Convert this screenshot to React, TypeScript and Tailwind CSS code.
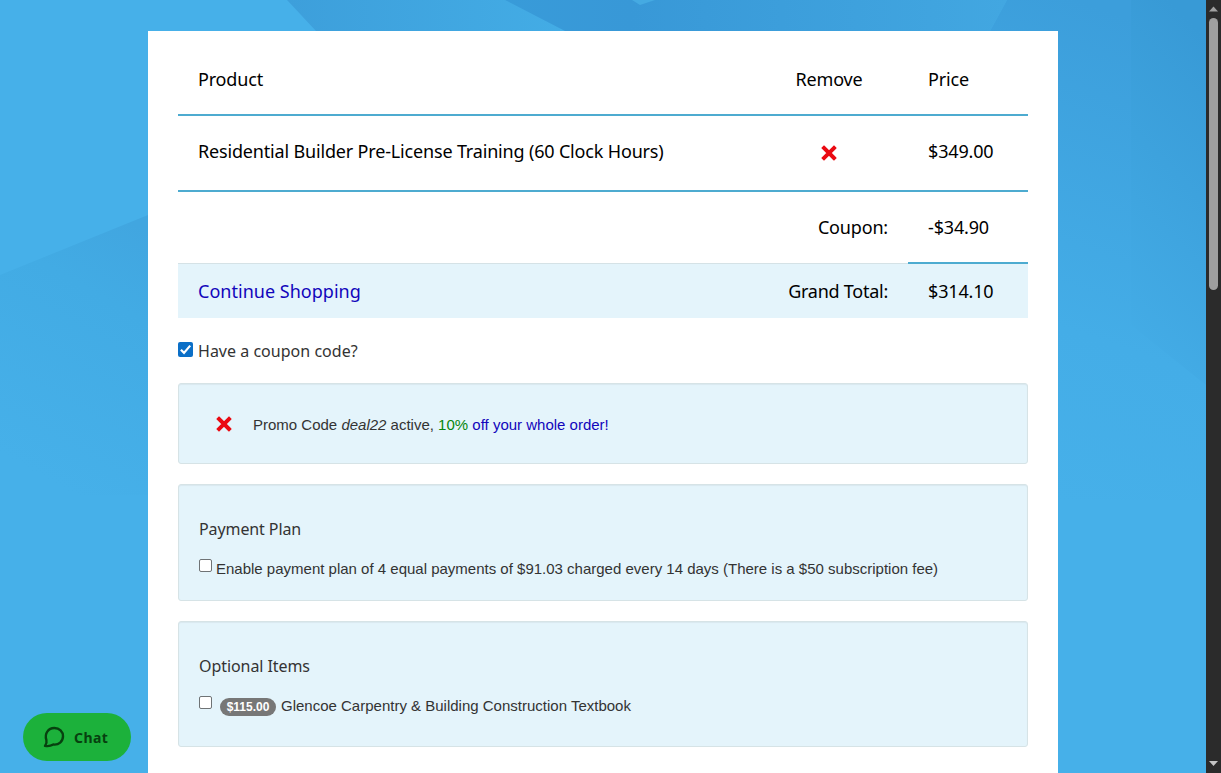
import { useState } from "react";

const RemoveIcon: React.FC = () => (
  <svg viewBox="0 0 16 16" className="block h-4 w-4" aria-label="Remove">
    <path d="M3 3 13 13M13 3 3 13" stroke="#ea0a12" strokeWidth="3.9" strokeLinecap="square" />
  </svg>
);

const Checkbox: React.FC<{ checked: boolean; onChange: () => void; label: string; large?: boolean }> = ({
  checked,
  onChange,
  label,
  large,
}) => (
  <button
    type="button"
    role="checkbox"
    aria-checked={checked}
    aria-label={label}
    onClick={onChange}
    className={`flex shrink-0 items-center justify-center rounded-[2px] ${large ? "h-[15px] w-[15px]" : "h-[13px] w-[13px]"} ${
      checked ? "bg-[#0b6fc7] text-white" : "border border-[#6f7375] bg-white"
    }`}
  >
    {checked && (
      <svg viewBox="0 0 15 15" className="h-[15px] w-[15px]" fill="none" stroke="currentColor" strokeWidth="2.2">
        <path d="M2.9 7.8 6 10.9 12.2 3.6" />
      </svg>
    )}
  </button>
);

const Backdrop: React.FC = () => (
  <svg className="absolute inset-0 h-full w-full" viewBox="0 0 1206 773" preserveAspectRatio="none">
    <defs>
      <linearGradient id="left" x1="0.8" y1="0" x2="0.5" y2="1">
        <stop offset="0" stopColor="#41a6e0" />
        <stop offset="0.3" stopColor="#42abe4" />
        <stop offset="1" stopColor="#46b0e9" />
      </linearGradient>
      <linearGradient id="top" x1="0" y1="0" x2="1" y2="0">
        <stop offset="0" stopColor="#3d9fdb" />
        <stop offset="1" stopColor="#43ace5" />
      </linearGradient>
      <linearGradient id="mid" x1="0" y1="0" x2="1" y2="0">
        <stop offset="0" stopColor="#389bd9" />
        <stop offset="0.25" stopColor="#3898d7" />
        <stop offset="1" stopColor="#42a7e1" />
      </linearGradient>
      <linearGradient id="right" x1="0.4" y1="0" x2="0.25" y2="1">
        <stop offset="0" stopColor="#3c9edb" />
        <stop offset="0.65" stopColor="#44ade7" />
        <stop offset="1" stopColor="#46b0e9" />
      </linearGradient>
      <linearGradient id="edge" x1="0.5" y1="0" x2="0.3" y2="1">
        <stop offset="0" stopColor="#389ad6" />
        <stop offset="1" stopColor="#44ade7" />
      </linearGradient>
    </defs>
    <rect width="1206" height="773" fill="#46b0e9" />
    <path d="M0 275 148 215V495H0Z" fill="url(#left)" />
    <path d="M287 0H560V31H316Z" fill="url(#top)" />
    <path d="M505 0H1007L990 31H565Z" fill="url(#mid)" />
    <path d="M632 0H655L640 5Z" fill="#45aae2" />
    <path d="M1007 0H1206V500H1058V31H990Z" fill="url(#right)" />
    <path d="M1131 0H1206V385L1131 325Z" fill="url(#edge)" />
  </svg>
);

const Scrollbar: React.FC = () => (
  <div className="flex w-[15px] shrink-0 flex-col items-center bg-[#2b2b2b]">
    <svg viewBox="0 0 15 18" className="h-[18px] w-[15px]">
      <path d="M3 11.5 7.5 6.5 12 11.5Z" fill="#a0a0a0" />
    </svg>
    <div className="h-[272px] w-[9px] rounded-full bg-[#9f9f9f]" />
    <svg viewBox="0 0 15 18" className="mt-auto h-[18px] w-[15px]">
      <path d="M3 6 7.5 11 12 6Z" fill="#c5c5c5" />
    </svg>
  </div>
);

const panel = "rounded-[3px] border border-[#d6e3e6] bg-[#e4f4fb] shadow-[inset_0_1px_1px_rgba(0,0,0,0.05)]";

export default function App() {
  const [hasCoupon, setHasCoupon] = useState(true);
  const [paymentPlan, setPaymentPlan] = useState(false);
  const [textbook, setTextbook] = useState(false);

  return (
    <div className="flex h-screen overflow-hidden">
      <div className="relative flex-1">
        <Backdrop />
        <main className="relative mx-auto mt-[31px] h-[742px] w-[910px] bg-white px-[30px] pt-[13px] font-['Noto_Sans',sans-serif] text-[#333]">
          <div className="text-[18px] tracking-[-0.17px] text-black">
            <div className="grid h-[72px] grid-cols-[572px_158px_120px] items-center border-b-2 border-[#4dabd0]">
              <span className="pl-5">Product</span>
              <span className="text-center">Remove</span>
              <span className="pl-5">Price</span>
            </div>
            <div className="grid h-[76px] grid-cols-[572px_158px_120px] items-center border-b-2 border-[#4dabd0] pb-1">
              <span className="pl-5">Residential Builder Pre-License Training (60 Clock Hours)</span>
              <button type="button" className="mx-auto pt-[3px]">
                <RemoveIcon />
              </button>
              <span className="pl-5">$349.00</span>
            </div>
            <div className="flex h-[72px]">
              <div className="flex h-[71px] w-[730px] items-center justify-end pr-5">Coupon:</div>
              <div className="flex w-[120px] items-center border-b-2 border-[#4dabd0] pl-5">-$34.90</div>
            </div>
            <div className="-mt-px grid h-[55px] grid-cols-[365px_365px_120px]">
              <div className="flex items-center border-t border-[#d5e2e6] bg-[#e4f4fb] pl-5">
                <a href="#" className="tracking-[0.02px] text-[#1205bb]">Continue Shopping</a>
              </div>
              <div className="flex items-center justify-end border-t border-[#d5e2e6] bg-[#e4f4fb] pr-5 tracking-[-0.25px]">
                Grand Total:
              </div>
              <div className="mt-px flex items-center bg-[#e4f4fb] pl-5">$314.10</div>
            </div>
          </div>

          <div className="flex h-[65px] items-center gap-[5px] text-[16px]">
            <div className="-mt-[3px]">
              <Checkbox large checked={hasCoupon} onChange={() => setHasCoupon(!hasCoupon)} label="Have a coupon code?" />
            </div>
            <span className="tracking-[0.02px]">Have a coupon code?</span>
          </div>

          <section className={`${panel} flex h-[81px] items-center pl-[37px]`}>
            <button type="button">
              <RemoveIcon />
            </button>
            <p className="ml-[21px] mt-[3px] font-['Liberation_Sans',sans-serif] text-[15px]">
              Promo Code <em>deal22</em> active, <span className="text-[#07860b]">10%</span>{" "}
              <span className="text-[#1205bb]">off your whole order!</span>
            </p>
          </section>

          <section className={`${panel} mt-5 h-[117px] px-5 pt-8`}>
            <h2 className="text-[16px] leading-6 tracking-[-0.1px]">Payment Plan</h2>
            <div className="mt-4 flex gap-1 font-['Liberation_Sans',sans-serif] text-[15px] leading-6">
              <div className="pt-0.5">
                <Checkbox checked={paymentPlan} onChange={() => setPaymentPlan(!paymentPlan)} label="Enable payment plan" />
              </div>
              <span>
                Enable payment plan of 4 equal payments of $91.03 charged every 14 days (There is a $50 subscription fee)
              </span>
            </div>
          </section>

          <section className={`${panel} mt-5 h-[126px] px-5 pt-8`}>
            <h2 className="text-[16px] leading-6 tracking-[-0.07px]">Optional Items</h2>
            <div className="mt-4 flex font-['Liberation_Sans',sans-serif] text-[15px] leading-6">
              <div className="pt-0.5">
                <Checkbox checked={textbook} onChange={() => setTextbook(!textbook)} label="Textbook" />
              </div>
              <span className="ml-2 mt-1 h-[18px] w-14 rounded-full bg-[#777] text-center text-[12px] font-bold leading-[18px] text-white">
                $115.00
              </span>
              <span className="ml-[5px]">Glencoe Carpentry &amp; Building Construction Textbook</span>
            </div>
          </section>
        </main>
      </div>
      <Scrollbar />

      <button
        type="button"
        className="fixed bottom-3 left-[23px] flex h-12 w-[108px] items-center rounded-full bg-[#1cb13b] pl-5 font-['Noto_Sans',sans-serif] text-[14px] font-bold tracking-[0.4px] text-[#07400f]"
      >
        <svg viewBox="0 0 22 22" className="mr-[9px] h-[22px] w-[22px]" fill="none" stroke="currentColor" strokeWidth="2.4" strokeLinejoin="round">
          <path d="M3.4 14.2C1.2 7.5 5.3 2 11.4 2C16.4 2 20 5.7 20 10.3C20 15.5 15.7 19.2 10.3 18.5C7.8 20 5 20.4 2 19.9C3.4 18.1 3.9 16.2 3.4 14.2Z" />
        </svg>
        Chat
      </button>
    </div>
  );
}
